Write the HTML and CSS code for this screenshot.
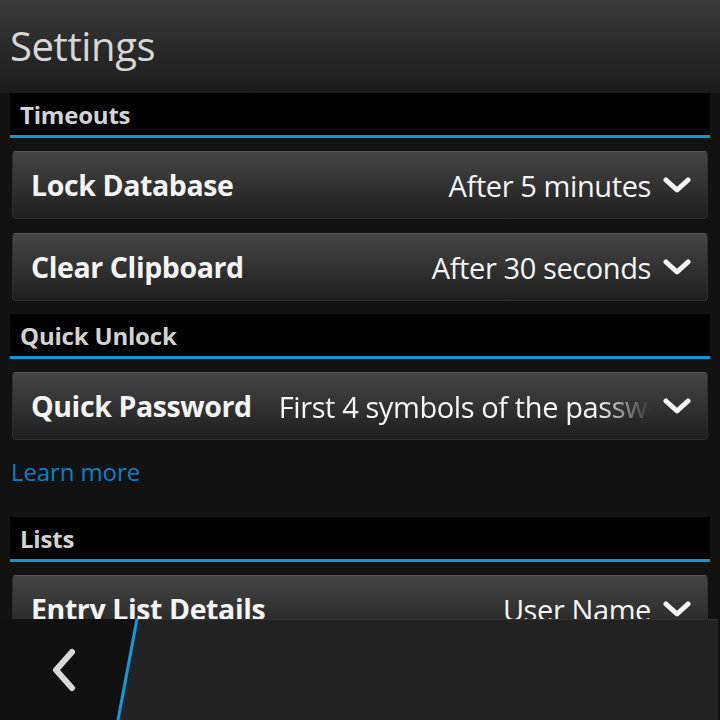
FILE: index.html
```html
<!DOCTYPE html>
<html>
<head>
<meta charset="utf-8">
<link rel="stylesheet" href="styles.css">
</head>
<body>
<header class="titlebar"><h1 class="title">Settings</h1></header>
<main class="content">
  <div class="section">Timeouts</div>
  <div class="card"><span class="label">Lock Database</span><span class="value">After 5 minutes</span><svg class="chev" viewBox="0 0 28 16"><path d="M3 3 L14 13 L25 3" /></svg></div>
  <div class="card"><span class="label">Clear Clipboard</span><span class="value">After 30 seconds</span><svg class="chev" viewBox="0 0 28 16"><path d="M3 3 L14 13 L25 3" /></svg></div>
  <div class="section">Quick Unlock</div>
  <div class="card"><span class="label">Quick Password</span><span class="value fade">First 4 symbols of the password</span><svg class="chev" viewBox="0 0 28 16"><path d="M3 3 L14 13 L25 3" /></svg></div>
  <div class="learn">Learn more</div>
  <div class="section">Lists</div>
  <div class="card"><span class="label">Entry List Details</span><span class="value">User Name</span><svg class="chev" viewBox="0 0 28 16"><path d="M3 3 L14 13 L25 3" /></svg></div>
</main>
<footer class="actionbar">
  <div class="back"><svg viewBox="0 0 30 44" class="backicon"><path d="M23 4 L7 22 L23 40" /></svg></div>
  <svg class="slash" viewBox="0 0 24 101"><path d="M21 0 L2 101" /></svg>
</footer>
</body>
</html>
```
FILE: styles.css
```css
html, body {
  margin: 0;
  padding: 0;
  background: #121212;
  width: 720px;
  height: 720px;
  overflow: hidden;
  font-family: "Open Sans", "Noto Sans", sans-serif;
}
.titlebar {
  height: 93px;
  background: linear-gradient(#3a3a3a, #1b1b1b);
  display: flex;
  align-items: center;
  padding-left: 10px;
  box-sizing: border-box;
}
.title {
  margin: 0;
  font-weight: 400;
  font-size: 40px;
  color: #d6d6d6;
  letter-spacing: -0.4px;
  padding-bottom: 2px;
}
.content {
  padding: 0 10px;
  display: flex;
  flex-direction: column;
}
.section {
  background: #000;
  height: 42px;
  border-bottom: 3px solid #0a99d1;
  color: #d2d2d2;
  font-weight: 700;
  font-size: 24px;
  line-height: 44px;
  padding-left: 10px;
  letter-spacing: -0.2px;
}
.card + .section { margin-top: 13px; }
.card {
  margin: 13px 2px 0;
  height: 66px;
  border-radius: 4px;
  border: 1px solid #2e2e2e;
  border-top-color: #575757;
  background: linear-gradient(#454545, #1f1f1f);
  display: flex;
  align-items: center;
  padding: 0 16px 0 18px;
  color: #f4f4f4;
}
.card + .card { margin-top: 14px; }
.label {
  font-weight: 700;
  font-size: 28.5px;
  letter-spacing: -0.4px;
  white-space: nowrap;
  flex: none;
}
.value {
  flex: 1;
  text-align: right;
  font-size: 29px;
  letter-spacing: -0.4px;
  white-space: nowrap;
  overflow: hidden;
  margin-left: 27px;
}
.value.fade {
  text-align: left;
  -webkit-mask-image: linear-gradient(to right, #000 86%, transparent 100%);
  mask-image: linear-gradient(to right, #000 86%, transparent 100%);
}
.chev {
  width: 28px;
  height: 16px;
  margin-left: 12px;
  flex: none;
}
.chev path {
  fill: none;
  stroke: #f4f4f4;
  stroke-width: 5;
  stroke-linecap: round;
  stroke-linejoin: round;
}
.learn {
  color: #0a80c8;
  font-size: 24px;
  height: 77px;
  line-height: 64px;
  margin-left: 1px;
  letter-spacing: -0.1px;
}
.actionbar {
  position: fixed;
  left: 0;
  top: 619px;
  width: 718px;
  height: 101px;
  background: #232323;
  border-top: 1px solid #333;
  box-sizing: border-box;
}
.back {
  width: 140px;
  height: 101px;
  margin-top: -1px;
  background: #111;
  clip-path: polygon(0 0, 137px 0, 118px 100%, 0 100%);
  display: flex;
  align-items: center;
  padding-left: 49px;
  box-sizing: border-box;
}
.backicon {
  width: 30px;
  height: 44px;
}
.backicon path {
  fill: none;
  stroke: #d8d8d8;
  stroke-width: 6;
  stroke-linecap: round;
  stroke-linejoin: round;
}
.slash {
  position: absolute;
  left: 116px;
  top: -1px;
  width: 24px;
  height: 101px;
}
.slash path {
  stroke: #0a9fdc;
  stroke-width: 3;
}
```
